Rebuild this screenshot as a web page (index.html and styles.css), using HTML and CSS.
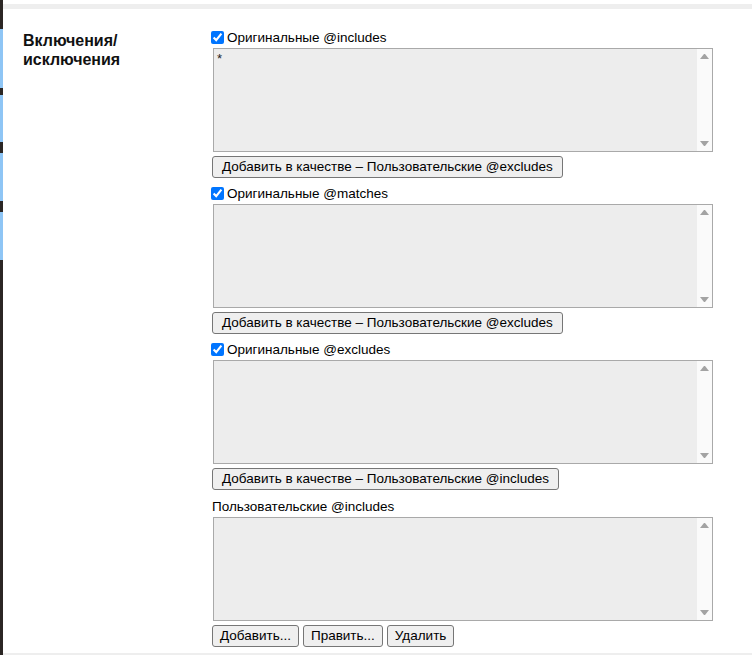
FILE: index.html
```html
<!DOCTYPE html>
<html lang="ru">
<head>
<meta charset="utf-8">
<title>Включения/исключения</title>
<link rel="stylesheet" href="styles.css">
</head>
<body>
<div class="page">
  <div class="edge">
    <div class="seg dark s1"></div>
    <div class="seg blue s2"></div>
    <div class="seg dark s3"></div>
    <div class="seg blue s4"></div>
    <div class="seg dark s5"></div>
    <div class="seg blue s6"></div>
    <div class="seg dark s7"></div>
    <div class="seg blue s8"></div>
    <div class="seg dark fill"></div>
  </div>
  <div class="main">
    <div class="topband"></div>
    <div class="panel">
      <div class="section-title">Включения/<br>исключения</div>
      <div class="fields">
        <div class="group">
          <label class="row"><input type="checkbox" class="check" checked>Оригинальные @includes</label>
          <div class="list">
            <textarea class="list-input" readonly>*</textarea>
            <div class="scrollbar"><span class="sb-btn"><i class="arrow up"></i></span><span class="sb-btn"><i class="arrow down"></i></span></div>
          </div>
          <button class="btn" type="button">Добавить в качестве – Пользовательские @excludes</button>
        </div>
        <div class="group">
          <label class="row"><input type="checkbox" class="check" checked>Оригинальные @matches</label>
          <div class="list">
            <textarea class="list-input" readonly></textarea>
            <div class="scrollbar"><span class="sb-btn"><i class="arrow up"></i></span><span class="sb-btn"><i class="arrow down"></i></span></div>
          </div>
          <button class="btn" type="button">Добавить в качестве – Пользовательские @excludes</button>
        </div>
        <div class="group">
          <label class="row"><input type="checkbox" class="check" checked>Оригинальные @excludes</label>
          <div class="list">
            <textarea class="list-input" readonly></textarea>
            <div class="scrollbar"><span class="sb-btn"><i class="arrow up"></i></span><span class="sb-btn"><i class="arrow down"></i></span></div>
          </div>
          <button class="btn" type="button">Добавить в качестве – Пользовательские @includes</button>
        </div>
        <div class="group">
          <div class="row plain">Пользовательские @includes</div>
          <div class="list">
            <textarea class="list-input" readonly></textarea>
            <div class="scrollbar"><span class="sb-btn"><i class="arrow up"></i></span><span class="sb-btn"><i class="arrow down"></i></span></div>
          </div>
          <div class="btn-row">
            <button class="btn" type="button">Добавить...</button>
            <button class="btn" type="button">Править...</button>
            <button class="btn" type="button">Удалить</button>
          </div>
        </div>
      </div>
    </div>
  </div>
</div>
</body>
</html>
```
FILE: styles.css
```css
html, body {
  margin: 0;
  padding: 0;
  background: #ffffff;
}

body {
  font-family: "Liberation Sans", Arial, sans-serif;
  font-size: 13.5px;
  color: #000;
}

.page {
  display: flex;
  height: 655px;
  overflow: hidden;
}

.edge {
  width: 3px;
  display: flex;
  flex-direction: column;
  flex: none;
}

.seg.dark { background: #2b2624; }
.seg.blue { background: #8ec5f5; }
.s1 { height: 29px; }
.s2 { height: 59px; }
.s3 { height: 7px; }
.s4 { height: 47px; }
.s5 { height: 11px; }
.s6 { height: 48px; }
.s7 { height: 11px; }
.s8 { height: 48px; }
.fill { flex: 1; }

.main {
  flex: 1;
  display: flex;
  flex-direction: column;
}

.topband {
  height: 5px;
  margin-top: 4px;
  background: #eeeeee;
  flex: none;
}

.panel {
  flex: 1;
  display: grid;
  grid-template-columns: 189px 1fr;
  padding: 20px 0 0 20px;
  border-bottom: 2px solid #eeeeee;
}

.section-title {
  font-weight: bold;
  font-size: 16px;
  line-height: 19px;
  margin-top: 2px;
  color: #111;
}

.fields {
  display: flex;
  flex-direction: column;
  gap: 7px;
}

.group {
  display: flex;
  flex-direction: column;
  align-items: flex-start;
}

.row {
  display: flex;
  align-items: flex-start;
  height: 19px;
  line-height: 17px;
}

.row.plain {
  height: 20px;
  line-height: 20px;
}

.check {
  width: 13px;
  height: 13px;
  margin: 2px 3px 0 -1px;
  accent-color: #0075ff;
}

.list {
  box-sizing: border-box;
  display: flex;
  width: 500px;
  height: 104px;
  margin-left: 1px;
  border: 1px solid #a9a9a9;
  background: #ededed;
}

.list-input {
  flex: 1;
  margin: 0;
  padding: 2px 3px;
  border: 0;
  background: transparent;
  font-family: "Liberation Sans", Arial, sans-serif;
  font-size: 13px;
  line-height: 15px;
  color: #222;
  resize: none;
  overflow: hidden;
  outline: none;
}

.scrollbar {
  width: 15px;
  flex: none;
  display: flex;
  flex-direction: column;
  justify-content: space-between;
  background: #fafafa;
}

.sb-btn {
  height: 15px;
  display: flex;
  align-items: center;
  justify-content: center;
}

.arrow {
  width: 1px;
  height: 0;
  border-left: 4px solid transparent;
  border-right: 4px solid transparent;
}

.arrow.up {
  border-bottom: 5px solid #a3a3a3;
}

.arrow.down {
  border-top: 5px solid #a3a3a3;
}

.btn {
  box-sizing: border-box;
  height: 22px;
  margin-top: 4px;
  padding: 0 9px;
  border: 1px solid #767676;
  border-radius: 3px;
  background: #efefef;
  font-family: "Liberation Sans", Arial, sans-serif;
  font-size: 13.5px;
  line-height: 20px;
  color: #000;
}

.btn-row {
  display: flex;
  gap: 4px;
}

.btn-row .btn {
  padding: 0 7px;
}
```
